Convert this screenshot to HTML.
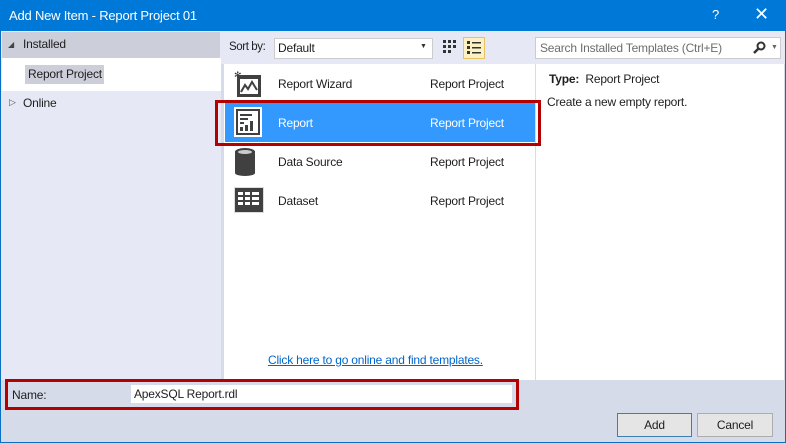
<!DOCTYPE html>
<html><head><style>
*{margin:0;padding:0;box-sizing:border-box}
body{width:786px;height:443px;background:#d6dbe9;font-family:"Liberation Sans",sans-serif;font-size:12px;letter-spacing:-0.2px;color:#1e1e1e;position:relative;overflow:hidden}
.a{position:absolute}
</style></head><body>
<div class="a" style="left:1px;top:31px;width:220px;height:349px;background:#e6e9f5"></div>
<div class="a" style="left:0;top:0;width:786px;height:443px;border:1px solid #0a6fc2;border-top:none"></div>
<div class="a" style="left:0;top:0;width:786px;height:31px;background:#0078d7;color:#fff;font-size:13px;line-height:31px;padding-left:9px">Add New Item - Report Project 01</div>
<div class="a" style="left:712px;top:7px;color:#fff;font-size:13px">?</div>
<div class="a" style="left:754px;top:4px;color:#fff;font-size:18px">✕</div>
<!-- left pane -->
<div class="a" style="left:2px;top:32px;width:218px;height:26px;background:#cccfd9"></div>
<div class="a" style="left:8px;top:40px;font-size:8px;color:#444">◢</div>
<div class="a" style="left:23px;top:37px">Installed</div>
<div class="a" style="left:2px;top:58px;width:219px;height:33px;background:#fff"></div>
<div class="a" style="left:25px;top:65px;width:79px;height:19px;background:#cccfd9"></div>
<div class="a" style="left:28px;top:67px">Report Project</div>
<div class="a" style="left:9px;top:97px;font-size:9px;color:#555">▷</div>
<div class="a" style="left:23px;top:96px">Online</div>
<!-- middle -->
<div class="a" style="left:221px;top:31px;width:564px;height:33px;background:#e6e9f5"></div>
<div class="a" style="left:229px;top:41px;font-size:11.5px;letter-spacing:-0.4px">Sort by:</div>
<div class="a" style="left:274px;top:38px;width:159px;height:21px;background:#fff;border:1px solid #ccc;padding:2px 3px">Default</div>
<div class="a" style="left:420px;top:43px;font-size:7px;color:#333">▼</div>
<svg class="a" style="left:443px;top:40px" width="14" height="14"><g fill="#333"><rect x="0" y="0" width="3" height="3"/><rect x="5" y="0" width="3" height="3"/><rect x="10" y="0" width="3" height="3"/><rect x="0" y="5" width="3" height="3"/><rect x="5" y="5" width="3" height="3"/><rect x="10" y="5" width="3" height="3"/><rect x="0" y="10" width="3" height="3"/><rect x="5" y="10" width="3" height="3"/></g></svg>
<div class="a" style="left:463px;top:37px;width:22px;height:22px;background:#fdf1c4;border:1px solid #e5c365"></div>
<svg class="a" style="left:467px;top:41px" width="14" height="14"><g fill="#333"><rect x="0" y="0" width="3" height="3"/><rect x="5" y="1" width="9" height="1.5"/><rect x="0" y="5" width="3" height="3"/><rect x="5" y="6" width="9" height="1.5"/><rect x="0" y="10" width="3" height="3"/><rect x="5" y="11" width="9" height="1.5"/></g></svg>
<div class="a" style="left:535px;top:37px;width:246px;height:22px;background:#fff;border:1px solid #ccc;padding:3px 4px;color:#6d6d6d">Search Installed Templates (Ctrl+E)</div>
<svg class="a" style="left:753px;top:41px" width="13" height="13"><circle cx="8" cy="5" r="3.5" stroke="#333" stroke-width="2" fill="none"/><path d="M5.5 7.5 L1 12" stroke="#333" stroke-width="2.5"/></svg>
<div class="a" style="left:771px;top:44px;font-size:7px;color:#666">▼</div>
<div class="a" style="left:224px;top:64px;width:311px;height:316px;background:#fff"></div>
<div class="a" style="left:536px;top:64px;width:248px;height:316px;background:#fff"></div>
<!-- items -->
<svg class="a" style="left:234px;top:70px" width="30" height="28"><text x="0" y="8" font-size="9" fill="#333">✻</text><rect x="3" y="5" width="24" height="22" fill="#404040"/><rect x="6" y="9" width="18" height="15" fill="#fff"/><path d="M7 22 L11 15 L14 19 L18 12 L23 20" stroke="#404040" stroke-width="2" fill="none"/></svg>
<div class="a" style="left:278px;top:77px">Report Wizard</div>
<div class="a" style="left:430px;top:77px">Report Project</div>
<div class="a" style="left:215px;top:100px;width:326px;height:46px;border:3px solid #b30000"></div>
<div class="a" style="left:225px;top:103px;width:310px;height:39px;background:#3399ff"></div>
<svg class="a" style="left:234px;top:107px" width="28" height="30"><rect x="0" y="0" width="28" height="30" fill="#fff"/><rect x="2" y="2" width="24" height="26" fill="#404040"/><rect x="4" y="4" width="20" height="22" fill="#fff"/><rect x="6" y="7" width="12" height="2" fill="#404040"/><rect x="6" y="11" width="8" height="2" fill="#404040"/><rect x="6" y="15" width="4" height="2" fill="#404040"/><rect x="6" y="20" width="3" height="4" fill="#404040"/><rect x="11" y="18" width="3" height="6" fill="#404040"/><rect x="16" y="14" width="3" height="10" fill="#404040"/></svg>
<div class="a" style="left:278px;top:116px;color:#fff">Report</div>
<div class="a" style="left:430px;top:116px;color:#fff">Report Project</div>
<svg class="a" style="left:235px;top:147px" width="22" height="30"><rect x="0" y="4" width="20" height="22" fill="#404040"/><ellipse cx="10" cy="5" rx="10" ry="4" fill="#404040"/><ellipse cx="10" cy="26" rx="10" ry="3" fill="#404040"/><ellipse cx="10" cy="5" rx="7" ry="2" fill="#ccc"/></svg>
<div class="a" style="left:278px;top:155px">Data Source</div>
<div class="a" style="left:430px;top:155px">Report Project</div>
<svg class="a" style="left:234px;top:187px" width="30" height="26"><rect x="0" y="0" width="30" height="26" fill="#ddd"/><rect x="1" y="1" width="28" height="24" fill="#404040"/><g fill="#fff"><rect x="4" y="5" width="5" height="3"/><rect x="11" y="5" width="5" height="3"/><rect x="18" y="5" width="7" height="3"/><rect x="4" y="10" width="5" height="3"/><rect x="11" y="10" width="5" height="3"/><rect x="18" y="10" width="7" height="3"/><rect x="4" y="15" width="5" height="3"/><rect x="11" y="15" width="5" height="3"/><rect x="18" y="15" width="7" height="3"/></g></svg>
<div class="a" style="left:278px;top:194px">Dataset</div>
<div class="a" style="left:430px;top:194px">Report Project</div>
<div class="a" style="left:268px;top:353px;color:#0066cc;text-decoration:underline">Click here to go online and find templates.</div>
<div class="a" style="left:549px;top:72px"><b>Type:</b>&nbsp; Report Project</div>
<div class="a" style="left:547px;top:95px">Create a new empty report.</div>
<!-- bottom -->
<div class="a" style="left:5px;top:379px;width:514px;height:31px;border:3px solid #b30000"></div>
<div class="a" style="left:12px;top:388px">Name:</div>
<div class="a" style="left:131px;top:385px;width:381px;height:18px;background:#fff;padding:2px 3px">ApexSQL Report.rdl</div>
<div class="a" style="left:617px;top:413px;width:75px;height:24px;background:#e5e5e5;border:1px solid #3c7fb1;text-align:center;line-height:22px">Add</div>
<div class="a" style="left:697px;top:413px;width:76px;height:24px;background:#e5e5e5;border:1px solid #adadad;text-align:center;line-height:22px">Cancel</div>
</body></html>
